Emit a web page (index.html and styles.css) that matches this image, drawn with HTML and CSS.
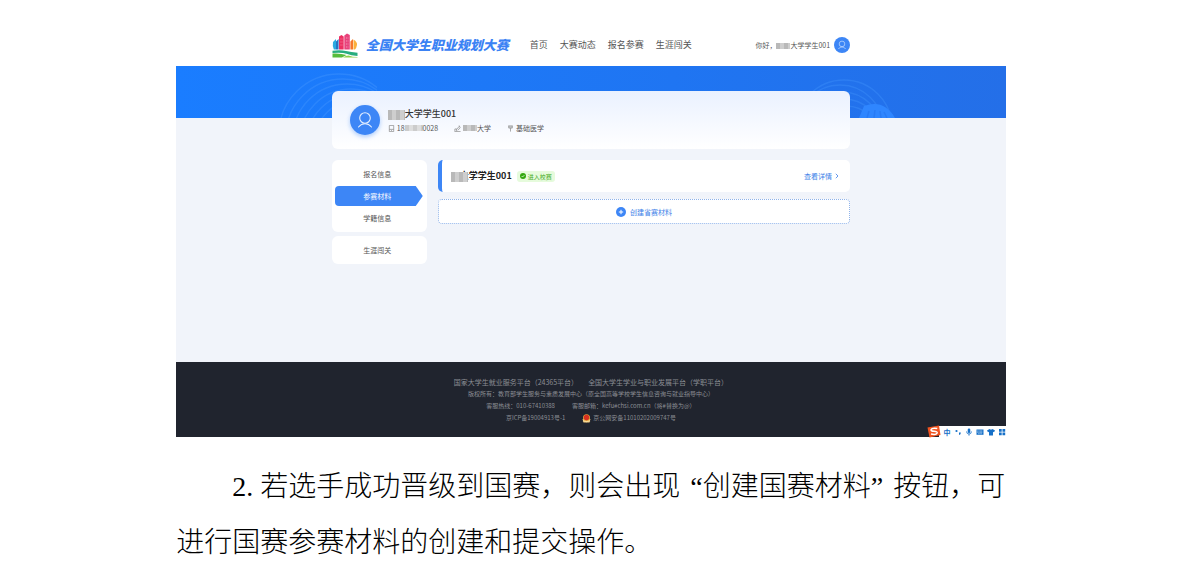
FILE: index.html
```html
<!DOCTYPE html>
<html lang="zh-CN">
    <head>
        <meta charset="utf-8">
        <meta name="viewport" content="width=device-width, initial-scale=1">
        <link rel="stylesheet" href="styles.css">
        <title>全国大学生职业规划大赛</title>
    </head>
    <body>
        <svg class="sprite" aria-hidden="true">
            <symbol id="person" viewBox="0 0 30 30">
                <circle cx="15" cy="13" r="5.3" fill="none" stroke="currentColor" stroke-width="1.1"/>
                <path d="M8.5 22c2-2.300 4-3.200 6.500-3.200s4.500.9 6.500 3.200" fill="none" stroke="currentColor" stroke-width="1.100" stroke-linecap="round"/>
            </symbol>
        </svg>
        <main class="document">
            <div class="site">
                <header class="header">
                    <div class="inner header-row">
                        <a class="brand" href="#">
                            <svg class="logo" viewBox="0 0 26 25" aria-hidden="true">
                                <path d="M1 9l3-3v10.500H1.800Q.3 13 1 9z" fill="#2aa9e0"/>
                                <path d="M4 8.500L6.600 6v10.500H4z" fill="#2474c4"/>
                                <path d="M7 3.500L9.500 2l2.200 1.500v13H7z" fill="#ec2f63"/>
                                <path d="M12.300 2.500L15 .5 17.800 2v14.500h-5.500z" fill="#e8437c"/>
                                <path d="M18.400 8.500L21 6v10.500h-2.600z" fill="#f5762c"/>
                                <path d="M21.500 6.500Q25.500 9 25 12q-.5 3-2 4.500h-1.500z" fill="#fbb03b"/>
                                <path d="M8.500 6h2M8.500 9h2M8.500 12h2M14 5h2.400M14 8h2.400M14 11h2.400M14 14h2.400" stroke="#fff" stroke-opacity=".7" stroke-width=".6" stroke-dasharray="1 .6"/>
                                <path d="M.5 17.800q8-1 13.500.3t11.500 1.600V23Q19 22.500 14.500 20.800T.5 20z" fill="#27ad7f"/>
                                <path d="M.5 20.500q8-.5 14 1.500L10 24.500H.5z" fill="#57bc3c"/>
                                <path d="M11 24.500q3-2 5.500-2 4 1.500 9 1.500v.5z" fill="#8ed04c"/>
                            </svg>
                            <span class="brand-name">全国大学生职业规划大赛</span>
                        </a>
                        <nav class="nav">
                            <a href="#">首页</a>
                            <a href="#">大赛动态</a>
                            <a href="#">报名参赛</a>
                            <a href="#">生涯闯关</a>
                        </nav>
                        <a class="user" href="#">
                            <span>你好，<span class="mosaic mosaic-s"></span>大学学生001</span>
                            <svg class="avatar avatar-s" aria-hidden="true"><use href="#person"/></svg>
                        </a>
                    </div>
                </header>
                <div class="banner">
                    <div class="inner banner-art">
                        <svg class="arcs arcs-left" viewBox="0 0 100 52" aria-hidden="true">
                            <g fill="none" stroke="#4a9bff" stroke-opacity=".35" stroke-width="1.400">
                                <circle cx="62" cy="68" r="60"/>
                                <circle cx="66" cy="70" r="57"/>
                                <circle cx="70" cy="72" r="54"/>
                                <circle cx="74" cy="74" r="51"/>
                                <circle cx="78" cy="76" r="48"/>
                                <circle cx="82" cy="78" r="45"/>
                            </g>
                        </svg>
                        <svg class="arcs arcs-right" viewBox="0 0 100 52" aria-hidden="true">
                            <g fill="none" stroke="#4a9bff" stroke-opacity=".3" stroke-width="1.400">
                                <circle cx="46" cy="62" r="48"/>
                                <circle cx="42" cy="62" r="43"/>
                                <circle cx="44" cy="66" r="40"/>
                                <circle cx="46" cy="70" r="37"/>
                                <circle cx="48" cy="74" r="34"/>
                            </g>
                            <path d="M61 52l5-12q20-7 31 12z" fill="#2f86ff"/>
                            <path d="M69 52l2-7M76 52l1-8M83 52l-1-7M89 52l-3-6" stroke="#2574ee" stroke-opacity=".6" stroke-width="1.500"/>
                        </svg>
                    </div>
                </div>
                <div class="inner content">
                    <section class="profile">
                        <svg class="avatar avatar-l" aria-hidden="true"><use href="#person"/></svg>
                        <div>
                            <h1 class="profile-name"><span class="mosaic mosaic-l"></span>大学学生001</h1>
                            <ul class="facts">
                                <li>
                                    <svg class="fact-icon" viewBox="0 0 8 8" aria-hidden="true"><path d="M1.500.5h5v7h-5zM1.500 5h5M3.500 6.300h1"/></svg>
                                    18<span class="mosaic mosaic-m"></span>0028
                                </li>
                                <li>
                                    <svg class="fact-icon" viewBox="0 0 8 8" aria-hidden="true"><path d="M.5 7.500h7M1 7V4.500h2V7M3 5l3-3.500L7 3 4.500 6M5.500.8l1.500 1"/></svg>
                                    <span class="mosaic mosaic-s"></span>大学
                                </li>
                                <li>
                                    <svg class="fact-icon" viewBox="0 0 8 8" aria-hidden="true"><path d="M1.500 1h5M2 1v2.500h4V1M2 2.300h4M4 3.500v4"/></svg>
                                    基础医学
                                </li>
                            </ul>
                        </div>
                    </section>
                    <div class="columns">
                        <aside class="sidebar">
                            <nav class="menu">
                                <a href="#">报名信息</a>
                                <a class="active" href="#">参赛材料</a>
                                <a href="#">学籍信息</a>
                            </nav>
                            <nav class="menu">
                                <a href="#">生涯闯关</a>
                            </nav>
                        </aside>
                        <section class="materials">
                            <article class="entry">
                                <h2 class="entry-name"><span class="mosaic mosaic-l mosaic-over"></span>大学学生001</h2>
                                <span class="badge">
                                    <svg class="badge-icon" viewBox="0 0 6 6" aria-hidden="true"><circle cx="3" cy="3" r="3" fill="#34a80f"/><path d="M1.600 3l1 1 1.800-1.900" fill="none" stroke="#fff" stroke-width=".7"/></svg>
                                    进入校赛
                                </span>
                                <a class="detail" href="#">
                                    查看详情
                                    <svg class="chevron" viewBox="0 0 4 6" aria-hidden="true"><path d="M.8.8L3 3 .8 5.200" fill="none" stroke="currentColor" stroke-width=".8"/></svg>
                                </a>
                            </article>
                            <button class="create" type="button">
                                <svg class="plus" viewBox="0 0 10 10" aria-hidden="true"><circle cx="5" cy="5" r="5" fill="#3d86f6"/><path d="M2.800 5h4.400M5 2.800v4.400" stroke="#fff"/></svg>
                                创建省赛材料
                            </button>
                        </section>
                    </div>
                </div>
                <footer class="footer">
                    <p class="platforms">
                        <a href="#">国家大学生就业服务平台（24365平台）</a>
                        <a href="#">全国大学生学业与职业发展平台（学职平台）</a>
                    </p>
                    <p>版权所有：教育部学生服务与素质发展中心（原全国高等学校学生信息咨询与就业指导中心）</p>
                    <p>
                        <span>客服热线：010-67410388</span>
                        <span>客服邮箱：kefu#chsi.com.cn（将#替换为@）</span>
                    </p>
                    <p>
                        <a href="#">京ICP备19004913号-1</a>
                        <a class="police" href="#">
                            <svg class="emblem" viewBox="0 0 9 9" aria-hidden="true"><path d="M.5 5h8L7.500 8.500h-6z" fill="#f2c879"/><circle cx="4.500" cy="3.800" r="3.500" fill="#e0a33c"/><circle cx="4.500" cy="3.500" r="2.700" fill="#d8301f"/><path d="M1 6.800q3.500 1.500 7 0" fill="none" stroke="#f7dc9a" stroke-width="1.200"/></svg>
                            京公网安备11010202009747号
                        </a>
                    </p>
                </footer>
                <div class="ime">
                    <svg class="ime-logo" viewBox="0 0 14 13" aria-hidden="true">
                        <path d="M.5 2.500L12 .5l1.500 9.500-11 2.500z" fill="#f0531f"/>
                        <path d="M10.300 3.500Q5 2.500 4 4.700q0 1.500 3 1.600 3.500.2 3.200 1.700Q9 10.300 4 9" fill="none" stroke="#fff" stroke-width="1.500"/>
                    </svg>
                    <span>中</span>
                    <svg viewBox="0 0 8 8" aria-hidden="true"><circle cx="2.500" cy="3" r="1.100"/><path d="M5 4.500h1.800Q7 6.500 5 7z"/></svg>
                    <svg viewBox="0 0 8 8" aria-hidden="true"><rect x="2.700" y=".5" width="2.600" height="4.500" rx="1.300"/><path d="M1.500 3.500Q1.700 6 4 6t2.500-2.500M4 6v1.700" fill="none" stroke="#1670c8" stroke-width=".8"/></svg>
                    <svg viewBox="0 0 8 8" aria-hidden="true"><path d="M.5 1.500h7v5.300h-7z"/><path d="M1.300 3h5.400M1.300 4.300h5.400M2.300 5.700h3.400" stroke="#fff" stroke-width=".6" stroke-dasharray=".9 .4"/></svg>
                    <svg viewBox="0 0 8 8" aria-hidden="true"><path d="M2.500 1Q4 2.200 5.500 1L8 2.500 7 4.300l-1-.5v3.700H2V3.800l-1 .5L0 2.500z"/></svg>
                    <svg viewBox="0 0 8 8" aria-hidden="true"><path d="M1 1h2.700v2.700H1zM4.500 1h2.700v2.700H4.500zM1 4.500h2.700v2.700H1zM4.500 4.500h2.700v2.700H4.500z"/></svg>
                </div>
            </div>
            <p class="step"><span class="step-number">2.</span>若选手成功晋级到国赛，则会出现<span class="quote quote-open">“</span>创建国赛材料<span class="quote quote-close">”</span>按钮，可进行国赛参赛材料的创建和提交操作。</p>
        </main>
    </body>
</html>
```
FILE: styles.css
```css
body {
    background: #fff;
    color: #555;
    font-family: "Noto Sans CJK SC", sans-serif;
    font-size: 7px;
    line-height: 12px;
    margin: 0;
}

h1, h2, p, ul {
    margin: 0;
    padding: 0;
}

a {
    color: inherit;
    text-decoration: none;
}

svg {
    display: block;
    flex: none;
}

.sprite {
    display: none;
}

.document {
    padding: 24px 15% 0 14.9%;
}

.site {
    background: #f1f4fa;
    position: relative;
}

.inner {
    margin: 0 auto;
    width: 62.5%;
}

/* header */
.header {
    background: #fff;
}

.header-row {
    align-items: center;
    display: flex;
    height: 42px;
}

.brand {
    align-items: center;
    display: flex;
    gap: 8px;
}

.logo {
    height: 25px;
    width: 26px;
}

.brand-name {
    color: #3b82f4;
    font-size: 13px;
    font-style: italic;
    font-weight: 900;
    white-space: nowrap;
}

.nav {
    display: flex;
    font-size: 9px;
    gap: 12px;
    margin-left: 21px;
    white-space: nowrap;
}

.user {
    align-items: center;
    display: flex;
    gap: 4px;
    margin-left: auto;
    white-space: nowrap;
}

.avatar {
    background: #3d86f6;
    border-radius: 50%;
    color: #e4efff;
}

.avatar-s {
    height: 16px;
    width: 16px;
}

.avatar-l {
    box-shadow: 0 2px 4px rgba(61, 134, 246, 0.4);
    height: 30px;
    width: 30px;
}

/* pixelated patches over private details */
.mosaic {
    background: repeating-linear-gradient(90deg, #b9b9b9 0 4px, #cecece 4px 8px);
    display: inline-block;
    height: 6px;
    vertical-align: middle;
}

.mosaic-s {
    width: 14px;
}

.mosaic-m {
    background: repeating-linear-gradient(90deg, #ccc 0 4px, #dedede 4px 8px);
    width: 18px;
}

.mosaic-l {
    height: 10px;
    width: 17px;
}

.mosaic-over {
    margin-right: -8px;
    position: relative;
}

/* banner */
.banner {
    background: linear-gradient(90deg, #1a7dff, #1f75f2 60%, #246fe8);
}

.banner-art {
    height: 52px;
    position: relative;
}

.arcs {
    height: 52px;
    position: absolute;
    top: 0;
    width: 100px;
}

.arcs-left {
    left: -55px;
}

.arcs-right {
    right: -48px;
}

/* content */
.content {
    min-height: 271px;
    margin-top: -27px;
    position: relative;
}

.profile {
    align-items: center;
    background: linear-gradient(#eaf1ff, #fff);
    border-radius: 6px;
    box-sizing: border-box;
    display: flex;
    gap: 8px;
    height: 58px;
    padding: 0 18px;
}

.profile-name {
    color: #333;
    font-size: 9px;
    font-weight: 500;
    line-height: 16px;
}

.facts {
    display: flex;
    gap: 16px;
    list-style: none;
}

.facts li {
    align-items: center;
    display: flex;
}

.fact-icon {
    fill: none;
    height: 7px;
    margin-right: 2px;
    stroke: #888;
    stroke-width: 0.8;
    width: 7px;
}

.columns {
    display: flex;
    gap: 11px;
    margin-top: 11px;
}

.sidebar {
    display: flex;
    flex: none;
    flex-direction: column;
    gap: 4px;
    width: 95px;
}

.menu {
    background: #fff;
    border-radius: 6px;
    display: flex;
    flex-direction: column;
    gap: 2px;
    padding: 4px 4px 4px 3px;
}

.menu a {
    line-height: 20px;
    padding-right: 3px;
    text-align: center;
}

.menu .active {
    background: #3d86f6;
    border-radius: 4px;
    clip-path: polygon(0 0, 81px 0, 100% 50%, 81px 100%, 0 100%);
    color: #fff;
}

.materials {
    display: flex;
    flex: 1;
    flex-direction: column;
    gap: 7px;
}

.entry {
    align-items: center;
    background: #fff;
    border-left: 4px solid #3d86f6;
    border-radius: 5px;
    display: flex;
    height: 32px;
    padding: 0 11px 0 9px;
}

.entry-name {
    color: #222;
    font-size: 9px;
    font-weight: 700;
}

.badge {
    align-items: center;
    background: #e6fbdc;
    border-radius: 3px;
    color: #45ab25;
    display: flex;
    font-size: 6px;
    gap: 2px;
    line-height: 11px;
    margin-left: 5px;
    padding: 0 3px;
}

.badge-icon {
    height: 6px;
    width: 6px;
}

.detail {
    align-items: center;
    color: #3d7fe8;
    display: flex;
    gap: 3px;
    margin-left: auto;
}

.chevron {
    height: 6px;
    width: 4px;
}

.create {
    align-items: center;
    background: #fff;
    border: 1px dotted #8fb3ea;
    border-radius: 4px;
    color: #3d7fe8;
    cursor: pointer;
    display: flex;
    font-family: inherit;
    font-size: 7px;
    gap: 4px;
    height: 25px;
    justify-content: center;
    padding: 0;
}

.plus {
    height: 10px;
    width: 10px;
}

/* footer */
.footer {
    background: #20242e;
    color: #8b8e94;
    font-size: 6px;
    padding: 14px 0 13px;
}

.footer p {
    display: flex;
    gap: 17px;
    justify-content: center;
}

.footer .platforms {
    font-size: 7px;
    gap: 10px;
}

.police {
    align-items: center;
    display: flex;
    gap: 2px;
}

.emblem {
    height: 9px;
    width: 9px;
}

/* input method bar, floats over the footer corner */
.ime {
    align-items: center;
    background: #fff;
    bottom: 0;
    color: #1670c8;
    display: flex;
    fill: #1670c8;
    font-weight: 700;
    gap: 3px;
    height: 11px;
    position: absolute;
    right: 0;
}

.ime svg {
    height: 8px;
    width: 8px;
}

.ime .ime-logo {
    height: 13px;
    margin-left: -12px;
    width: 14px;
}

/* manual text */
.step {
    color: #000;
    font-size: 28px;
    font-weight: 300;
    line-height: 56px;
    margin: 19px -8px 0 0;
    text-indent: 56px;
}

.step-number,
.quote {
    font-family: "Liberation Serif", serif;
    line-height: 28px;
}

.step-number {
    margin-right: 7px;
}

.quote-open {
    margin-left: 10px;
}

.quote-close {
    margin-right: 10px;
}
```
